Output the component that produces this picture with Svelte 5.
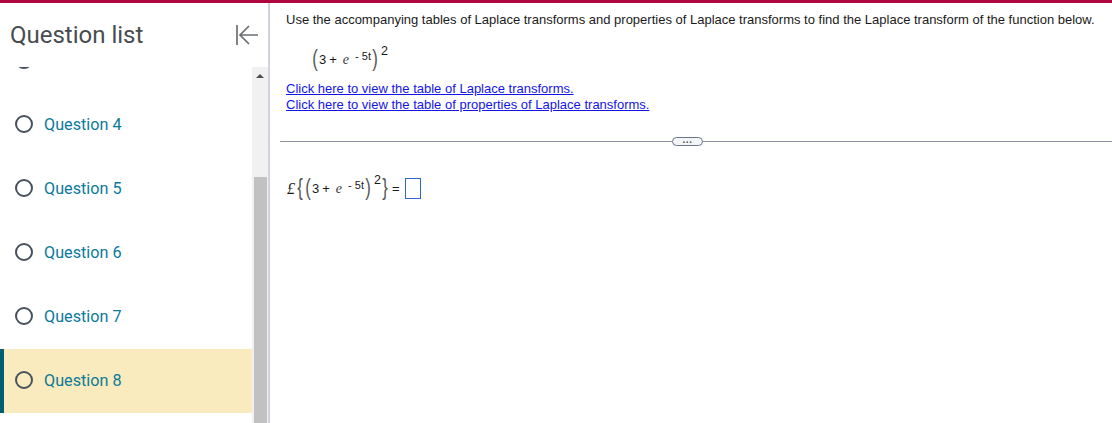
<script>
  const questions = [3, 4, 5, 6, 7, 8]
  const current = 8
</script>

<div class="page">
  <aside class="sidebar">
    <header class="side-head">
      <h2>Question list</h2>
      <button class="collapse" aria-label="Collapse question list">
        <svg width="22" height="20" viewBox="0 0 22 20" fill="none" stroke="#6b6e70" stroke-width="1.7">
          <path d="M1 0v20M22 10H4M13 1 4 10l9 9" />
        </svg>
      </button>
    </header>
    <div class="list-wrap">
      <ul class="list">
        {#each questions as q}
          <li class="item" class:active={q === current}>
            <span class="ring"></span>
            {#if q > 3}
              <span class="label">Question {q}</span>
            {/if}
          </li>
        {/each}
      </ul>
      <div class="scrollbar">
        <span class="arrow"></span>
        <span class="thumb"></span>
      </div>
    </div>
  </aside>

  <main class="content">
    <p class="prompt">Use the accompanying tables of Laplace transforms and properties of Laplace transforms to find the Laplace transform of the function below.</p>
    <div class="formula">
      <span class="paren">(</span><span class="num">3</span><span class="plus">+</span><i class="e">e</i><span class="exp">- 5t</span><span class="paren">)</span><span class="square">2</span>
    </div>
    <div class="links">
      <a href="#laplace">Click here to view the table of Laplace transforms.</a>
      <a href="#properties">Click here to view the table of properties of Laplace transforms.</a>
    </div>
    <div class="divider">
      <span class="more">...</span>
    </div>
    <div class="answer">
      <span class="script-l">£</span><span class="brace">{'{'}</span><span class="paren">(</span><span class="num">3</span><span class="plus">+</span><i class="e">e</i><span class="exp">- 5t</span><span class="paren">)</span><span class="square">2</span><span class="brace">{'}'}</span>
      <span class="eq">=</span>
      <span class="box"></span>
    </div>
  </main>
</div>

<style>
  :global(body) {
    margin: 0;
    background: #fff;
  }
  .page {
    display: flex;
    height: 423px;
    box-sizing: border-box;
    border-top: 3px solid #b0073f;
    overflow: hidden;
    font-family: "Liberation Sans", Arial, sans-serif;
  }
  .sidebar {
    width: 270px;
    flex: none;
    box-sizing: border-box;
    border-right: 2px solid #d2d3da;
    display: flex;
    flex-direction: column;
  }
  .side-head {
    height: 64px;
    flex: none;
    display: flex;
    align-items: center;
    justify-content: space-between;
    padding: 0 10px 1px;
    box-sizing: border-box;
  }
  h2 {
    margin: 0;
    font-size: 24px;
    font-weight: 400;
    color: #474c50;
    font-family: Roboto, "Liberation Sans", sans-serif;
  }
  .collapse {
    border: 0;
    background: none;
    padding: 0;
    margin: 0;
    width: 22px;
    height: 20px;
    line-height: 0;
  }
  .list-wrap {
    flex: 1;
    min-height: 0;
    display: flex;
    overflow: hidden;
  }
  .list {
    flex: 1;
    margin: -38px 0 0;
    padding: 0;
    list-style: none;
  }
  .item {
    height: 64px;
    display: flex;
    align-items: center;
    padding: 0 0 2px 15px;
    box-sizing: border-box;
  }
  .item.active {
    background: #f9ebbd;
    border-left: 4px solid #005f73;
    padding-left: 11px;
  }
  .ring {
    width: 18px;
    height: 18px;
    box-sizing: border-box;
    border: 2px solid #48525e;
    border-radius: 50%;
    margin-right: 11px;
  }
  .label {
    font-size: 16.2px;
    color: #0b7a9a;
    font-family: Roboto, "Liberation Sans", sans-serif;
  }
  .scrollbar {
    width: 16px;
    flex: none;
    background: #f1f1f1;
    display: flex;
    flex-direction: column;
    align-items: flex-start;
  }
  .arrow {
    margin: 7px 0 0 4px;
    border-left: 4px solid transparent;
    border-right: 4px solid transparent;
    border-bottom: 4px solid #505050;
  }
  .thumb {
    margin: 99px 0 0 2px;
    width: 13px;
    flex: 1;
    background: #c1c1c1;
  }
  .content {
    flex: 1;
    min-width: 0;
    padding-top: 9px;
    font-size: 13px;
    color: #1a1a1a;
  }
  .prompt {
    margin: 0 0 0 16px;
    line-height: 15px;
    white-space: nowrap;
  }
  .formula {
    margin: 16px 0 0 41px;
    height: 32px;
    display: flex;
    align-items: center;
    white-space: pre;
  }
  .paren {
    font-size: 24px;
    font-weight: 400;
    line-height: 1;
    margin-top: -3px;
    transform: scaleX(0.7);
    color: #555;
  }
  .num {
    margin-top: 1px;
  }
  .plus {
    margin: 1px 0 0 3px;
  }
  .e {
    font-family: "Liberation Serif", serif;
    font-size: 14px;
    margin: 1px 6px 0 6px;
    color: #3a3a3a;
  }
  .exp {
    font-size: 11px;
    align-self: flex-start;
    margin-top: 7px;
    line-height: 12px;
  }
  .square {
    font-size: 12.5px;
    align-self: flex-start;
    margin: 1px 0 0 2px;
    line-height: 14px;
  }
  .links {
    margin: 6px 0 0 16px;
    display: flex;
    flex-direction: column;
    line-height: 16px;
  }
  .links a {
    color: #1414e6;
    text-decoration: underline;
  }
  .divider {
    margin: 28px 0 0 10px;
    height: 1px;
    background: #8b92a3;
    position: relative;
  }
  .more {
    position: absolute;
    left: 392px;
    top: -4px;
    width: 31px;
    height: 9px;
    box-sizing: border-box;
    border: 1px solid #6d7688;
    border-radius: 5px;
    background: #f3f5f8;
    font-size: 10px;
    font-weight: 700;
    line-height: 3px;
    text-align: center;
    letter-spacing: 0.5px;
    color: #555;
  }
  .answer {
    margin: 30px 0 0 17px;
    height: 32px;
    display: flex;
    align-items: center;
    white-space: pre;
  }
  .script-l {
    font-family: "Liberation Serif", serif;
    font-style: italic;
    font-size: 16px;
    margin: 1px 1px 0 0;
  }
  .brace {
    font-size: 24px;
    font-weight: 400;
    line-height: 1;
    margin-top: -3px;
    transform: scaleX(0.7);
    color: #555;
  }
  .eq {
    margin: 0 5px 0 3px;
  }
  .box {
    width: 16px;
    height: 21px;
    box-sizing: border-box;
    border: 1.5px solid #2f66c8;
    margin-top: 1px;
  }
</style>
